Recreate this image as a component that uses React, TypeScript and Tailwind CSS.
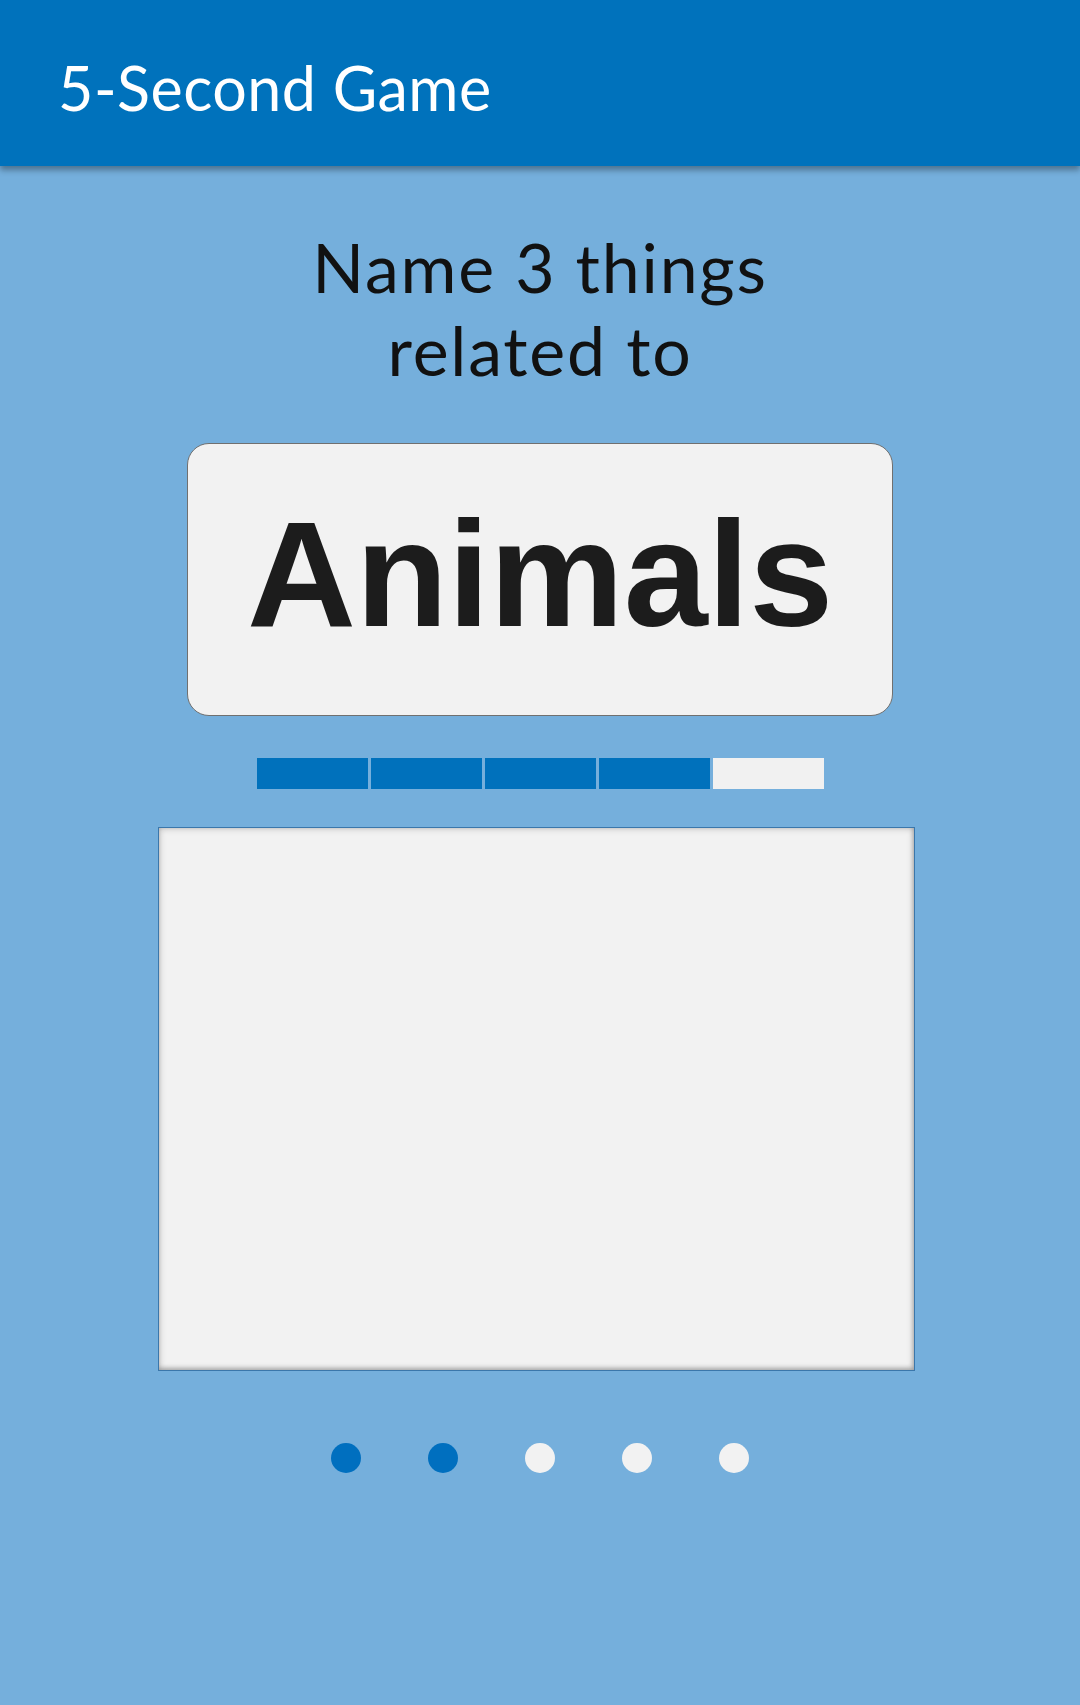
const segments = [true, true, true, true, false]
const dots = [true, true, false, false, false]

export default function App() {
  return (
    <div className="min-h-[1705px] w-full bg-[#75afdc] font-['Lato','Open_Sans',sans-serif]">
      <header className="relative z-10 flex h-[166px] items-center bg-[#0072bc] pl-[58px] pt-[8px] shadow-[0_4px_6px_rgba(0,0,0,0.35)]">
        <h1 className="text-[61px] leading-none tracking-[0.5px] text-white">5-Second Game</h1>
      </header>

      <main className="flex flex-col items-center">
        <p className="mt-[59px] text-center text-[68px] leading-[83px] tracking-[1.8px] text-[#111]">
          Name 3 things
          <br />
          related to
        </p>

        <div className="mt-[52px] flex h-[273px] w-[706px] items-center justify-center rounded-[22px] border border-[#707070] bg-[#f2f2f2] pb-[12px]">
          <span className="font-['Liberation_Sans',Arial,sans-serif] text-[151px] font-bold leading-none tracking-[-0.2px] text-[#1c1c1c]">
            Animals
          </span>
        </div>

        <div className="mt-[42px] flex gap-[3px]">
          {segments.map((on, i) => (
            <div
              key={i}
              className={`h-[31px] w-[111px] ${on ? 'bg-[#0071bc]' : 'bg-[#f1f1f1]'}`}
            />
          ))}
        </div>

        <div className="mr-[7px] mt-[38px] h-[544px] w-[757px] border border-[#3b77ab] bg-[#f2f2f2] shadow-[inset_0_0_7px_rgba(0,0,0,0.25),inset_-1px_-2px_4px_rgba(0,0,0,0.2)]" />

        <div className="mt-[72px] flex gap-[67px]">
          {dots.map((on, i) => (
            <span
              key={i}
              className={`h-[30px] w-[30px] rounded-full ${on ? 'bg-[#006fbf]' : 'bg-[#f2f2f2]'}`}
            />
          ))}
        </div>
      </main>
    </div>
  )
}
